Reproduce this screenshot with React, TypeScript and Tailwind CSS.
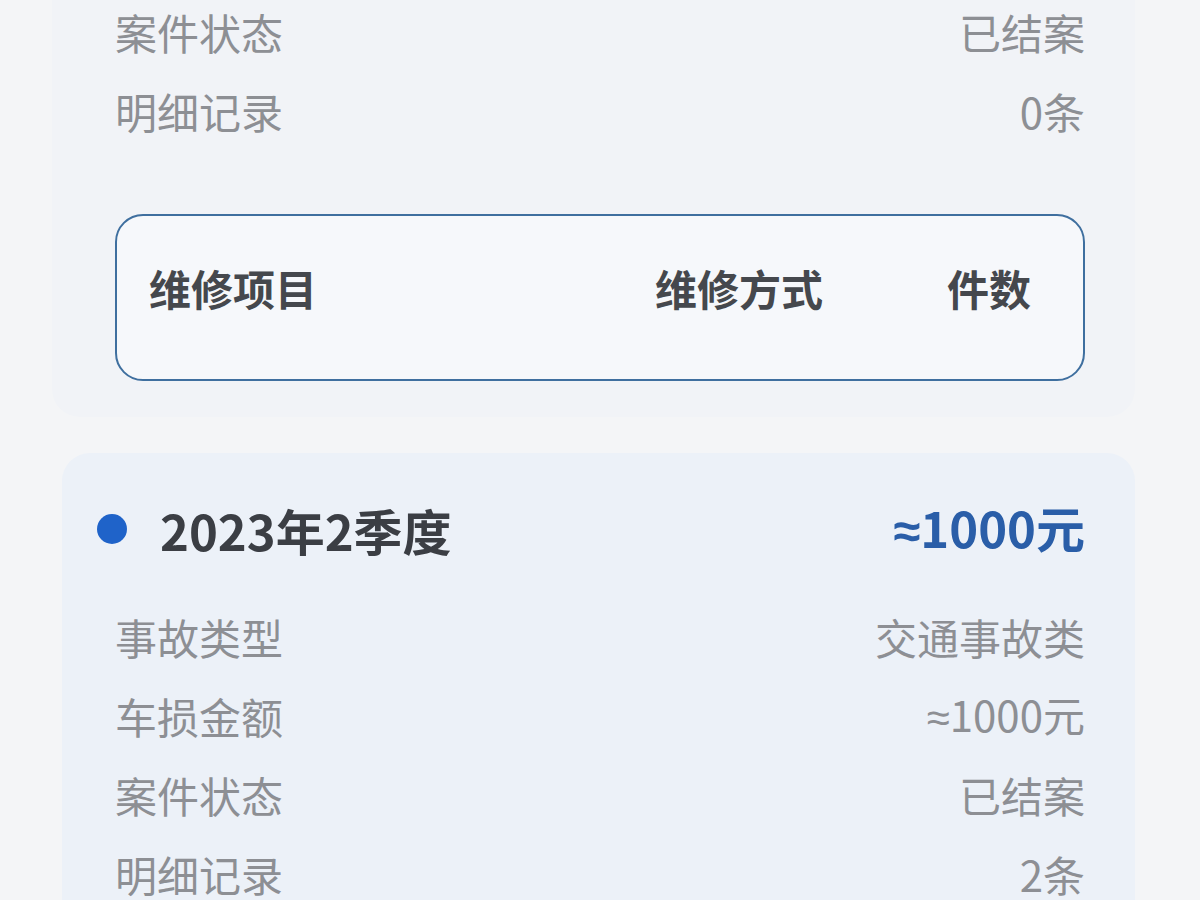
import React from "react";

const font = { fontFamily: '"Noto Sans CJK SC", "Noto Sans", sans-serif' };
const approx = { fontFamily: '"Liberation Sans", "Noto Sans", sans-serif' };

function Row({ label, value }: { label: string; value: React.ReactNode }) {
  return (
    <div className="flex h-[79px] items-center justify-between pb-[6px] text-[42px] leading-none text-[#8d8f94]">
      <span>{label}</span>
      <span>{value}</span>
    </div>
  );
}

export default function App() {
  return (
    <div className="h-[900px] w-[1200px] overflow-hidden bg-[#f4f5f7]" style={font}>
      {/* Top card (continues from above) */}
      <div className="-mt-[45px] ml-[52px] mr-[65px] rounded-b-[28px] bg-[#f1f3f7] pb-[36px] pl-[63px] pr-[50px] pt-[40px]">
        <Row label="案件状态" value="已结案" />
        <Row label="明细记录" value="0条" />
        <div className="mt-[61px] flex h-[167px] items-center rounded-[28px] border-2 border-[#3f6f9f] bg-[#f6f8fb] pb-[20px] pl-[32px] pr-[52px] text-[42px] font-bold leading-none text-[#45484d]">
          <span className="flex-1">维修项目</span>
          <span className="w-[292px]">维修方式</span>
          <span>件数</span>
        </div>
      </div>

      {/* Second card */}
      <div className="ml-[62px] mr-[65px] mt-[36px] rounded-[28px] bg-[#ecf1f8] pb-[40px] pl-[53px] pr-[50px] pt-[50px]">
        <div className="-ml-[18px] flex h-[66px] items-center justify-between pb-[14px]">
          <div className="flex items-center">
            <span className="h-[30px] w-[30px] rounded-full bg-[#1f63c9]" />
            <span className="ml-[33px] text-[49px] font-bold leading-none text-[#3b3e44]">2023年2季度</span>
          </div>
          <span className="text-[49px] font-bold leading-none text-[#2a5ea8]">
            <span style={approx}>≈</span>1000元
          </span>
        </div>
        <div className="mt-[31px]">
          <Row label="事故类型" value="交通事故类" />
          <Row label="车损金额" value={<><span style={approx}>≈</span>1000元</>} />
          <Row label="案件状态" value="已结案" />
          <Row label="明细记录" value="2条" />
        </div>
      </div>
    </div>
  );
}
